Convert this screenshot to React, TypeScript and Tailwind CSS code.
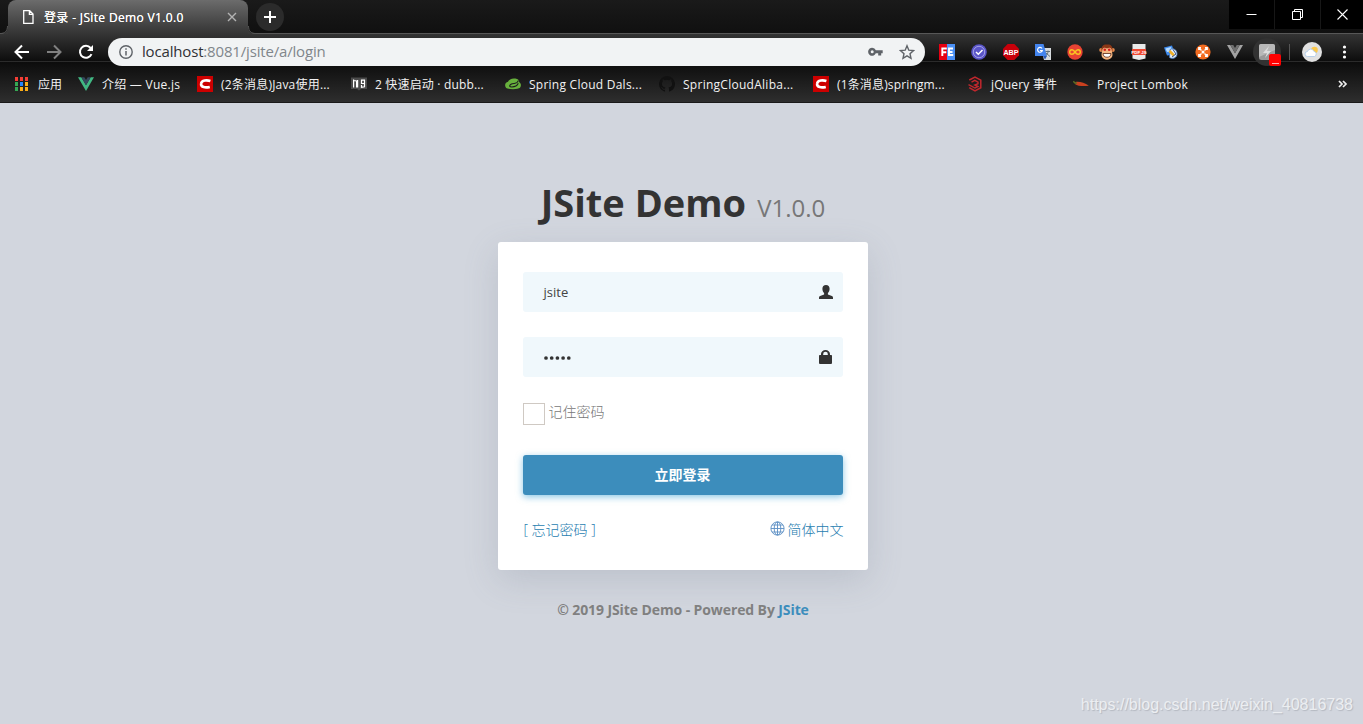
import React from "react";

type IconProps = { children: React.ReactNode; box?: string; className?: string };

function Icon({ children, box = "0 0 16 16", className = "size-4" }: IconProps) {
  return (
    <svg viewBox={box} className={`shrink-0 ${className}`} fill="none">
      {children}
    </svg>
  );
}

const CsdnIcon = () => (
  <Icon>
    <path fill="#c00" d="M0 0h16v16H0z" />
    <path d="M13.400 5C10 3.900 4.500 4 4.100 7.700c-.5 3.800 4.500 4.200 8.700 3.200" stroke="#fff" strokeWidth="2.600" />
  </Icon>
);

const AppsIcon = () => (
  <Icon>
    {[
      [1, 1, "#f43e35"], [6, 1, "#f43e35"], [11, 1, "#f43e35"],
      [1, 6, "#35a853"], [6, 6, "#2684fc"], [11, 6, "#fbad18"],
      [1, 11, "#35a853"], [6, 11, "#fbad18"], [11, 11, "#fbad18"],
    ].map(([x, y, c], i) => (
      <rect key={i} x={x} y={y} width="3" height="4" fill={c as string} />
    ))}
  </Icon>
);

const VueIcon = () => (
  <Icon>
    <path fill="#41b883" d="M0 1.200h3.300L8 9.300l4.700-8.100H16L8 15z" />
    <path fill="#35495e" d="M3.300 1.200h3L8 4l1.700-2.800h3L8 9.300z" />
  </Icon>
);

const DubboIcon = () => (
  <Icon>
    <path fill="#4a4a4a" d="M0 1.500h16v11.500H10l-2 1.500L6 13H0z" />
    <path d="M2.600 11.500V3.500M2.600 4.500l3 .5v6.500M6.600 4v7.500M13.500 4.200h-3v3.300h3M13.500 3.500v7.300l-3 .5V9" stroke="#fff" strokeWidth="1.200" />
  </Icon>
);

const SpringIcon = () => (
  <Icon>
    <path fill="#68b13d" d="M1 11.800C-.8 9.200.3 6.300 3 5.800 4 3 8 1.700 12 3c1.800.6 2 2 2.200 3.300 1.900 1 2.300 3.700.8 5.500-1.700 1.800-12.200 1.800-14 0z" />
    <path d="M13.300 4.500C12.500 8.500 8.500 6.700 6 8.300c-2.200 1.500-1.500 2.700.8 2.700 3-.1 5.500-1.400 6.500-3.700" stroke="#1d1d1d" strokeWidth="1.100" />
  </Icon>
);

const GithubIcon = () => (
  <Icon>
    <path
      fill="#111"
      d="M8 0a8 8 0 0 0-2.530 15.590c.4.070.55-.17.55-.38v-1.490c-2.230.49-2.700-.95-2.700-.95-.36-.93-.89-1.170-.89-1.170-.73-.5.05-.49.050-.49.800.06 1.230.83 1.230.83.720 1.220 1.870.87 2.330.66.070-.52.280-.87.510-1.070-1.780-.2-3.640-.89-3.640-3.950 0-.87.310-1.590.82-2.150-.08-.2-.36-1.020.08-2.120 0 0 .67-.21 2.200.82a7.600 7.600 0 0 1 4 0c1.530-1.040 2.200-.82 2.200-.82.440 1.100.16 1.920.08 2.120.51.56.820 1.270.82 2.150 0 3.070-1.870 3.750-3.650 3.950.29.250.54.730.54 1.480v2.200c0 .21.150.46.55.38A8 8 0 0 0 8 0z"
    />
  </Icon>
);

const JQueryIcon = () => (
  <Icon>
    <path d="M2.300 4 8 1l5.800 3.200v7.500L8 15l-5.800-3.300" stroke="#c1272d" strokeWidth="1.500" />
    <path d="m4.500 6.200 3.300-1.800 3.200 1.800v1.500L7.800 9 11 10.500 8 12 1.500 8.700" stroke="#c1272d" strokeWidth="1.400" />
  </Icon>
);

const ChiliIcon = () => (
  <Icon>
    <path fill="#c9401f" d="M2.500 6c4-.8 9 1 13.300 3.700-4.500.6-11.300.6-13.600-1.500z" />
    <path d="M.5 5C1 7 2 7.500 4 7" stroke="#596e22" strokeWidth="1.300" />
  </Icon>
);

const bookmarks = [
  { icon: <AppsIcon />, label: "应用", box: "w-[64px]", track: "" },
  { icon: <VueIcon />, label: "介绍 — Vue.js", box: "w-[119px]", track: "tracking-[0.25px]" },
  { icon: <CsdnIcon />, label: "(2条消息)Java使用...", box: "w-[154px]", track: "tracking-[0.2px]" },
  { icon: <DubboIcon />, label: "2 快速启动 · dubb...", box: "w-[154px]", track: "tracking-[0.17px]" },
  { icon: <SpringIcon />, label: "Spring Cloud Dals...", box: "w-[154px]", track: "tracking-[0.25px]" },
  { icon: <GithubIcon />, label: "SpringCloudAliba...", box: "w-[154px]", track: "tracking-[0.27px]" },
  { icon: <CsdnIcon />, label: "(1条消息)springm...", box: "w-[154px]", track: "tracking-[0.15px]" },
  { icon: <JQueryIcon />, label: "jQuery 事件", box: "w-[106px]", track: "tracking-[0.2px]" },
  { icon: <ChiliIcon />, label: "Project Lombok", box: "w-[120px]", track: "tracking-[0.23px]" },
];

const extensions = [
  <Icon>
    <path fill="#e60012" d="M0 0h8v16H0z" />
    <path fill="#4a90f5" d="M8 0h8v16H8z" />
    <path d="M3.300 12V4.500h4.500M3.300 8.300h4M14 4.500h-4V11h4.200M10 8h3.500" stroke="#fff" strokeWidth="1.900" />
  </Icon>,
  <Icon>
    <circle cx="8" cy="8" r="7.800" fill="#5a55c8" />
    <circle cx="8" cy="8" r="5.700" stroke="#b5b2ee" strokeWidth=".8" />
    <path d="m5 8 2.300 2.300L11.500 6" stroke="#fff" strokeWidth="1.500" />
  </Icon>,
  <Icon>
    <path fill="#c8000a" d="M4.700 0h6.600L16 4.700v6.600L11.300 16H4.700L0 11.300V4.700z" />
    <text x="8" y="10.800" fontSize="7.200" fontWeight="700" textAnchor="middle" fill="#fff" className="font-['Liberation_Sans',sans-serif]">ABP</text>
  </Icon>,
  <Icon>
    <path fill="#d6dadd" d="M6 4h10v12H9z" />
    <path fill="#4384ee" d="M0 0h8.500l3.500 12H0z" />
    <path fill="#2858b5" d="M8 12h4l-2 3.500z" />
    <path d="M7 4.500a2.400 2.400 0 1 0 .3 2H5" stroke="#fff" strokeWidth="1.200" />
    <path d="M10.500 7.500H15M13 6.500v1c0 2-1 3-2 4m0-2.500 4 3.500" stroke="#60717c" />
  </Icon>,
  <Icon>
    <circle cx="8" cy="8" r="7.700" fill="#e84333" />
    <path d="M8 8C6.800 6.200 6 5.700 5 5.700a2.300 2.300 0 0 0 0 4.600C6 10.300 6.800 9.800 8 8s2-2.300 3-2.300a2.300 2.300 0 0 1 0 4.600C10 10.300 9.200 9.800 8 8z" stroke="#f9c623" strokeWidth="1.400" />
  </Icon>,
  <Icon>
    <circle cx="2.200" cy="6" r="2" fill="#e3894c" />
    <circle cx="13.800" cy="6" r="2" fill="#e3894c" />
    <path fill="#8b3716" d="M2.500 6C2 2 5 0 8 .5c3-.5 6 1 5.500 6L12 13l-4 3-4-3z" />
    <path fill="#f5b681" d="M3.500 5c1.500-2 3-1.500 4.500-.5 1.500-1 3-1.500 4.500.5l1 5.500C13.500 14 11 15.500 8 15.500S2.500 14 2.500 10.500z" />
    <circle cx="5.800" cy="5.800" r="1.300" fill="#d61c1c" />
    <circle cx="10.200" cy="5.800" r="1.300" fill="#d61c1c" />
    <path fill="#fff" stroke="#592b18" strokeWidth=".8" d="M4 9.500h8c0 5-8 5-8 0z" />
  </Icon>,
  <Icon>
    <path fill="#e9e9e9" d="M1.500 0h13v14.500L8 16l-6.500-1.500z" />
    <path fill="#ee4932" d="M1 5h14v6H1z" />
    <text x="8" y="9.800" fontSize="4.400" fontWeight="700" textAnchor="middle" fill="#fff" className="font-['Liberation_Sans',sans-serif]">PDF JS</text>
  </Icon>,
  <Icon>
    <path fill="#3f8cf0" d="M1 3.500 9 1.500l3 9-8 1z" />
    <path fill="#b5dcff" d="m2.500 4.500 5.500-1.500 1 4.500-5 .5z" />
    <path fill="#e2effb" stroke="#3b70b8" strokeWidth=".8" d="M7 5.500c4-2 7.500 1 7 5-.5 3.500-4.500 5-7.500 3z" />
    <path d="m6.500 7 4.500 4.500" stroke="#f2b026" strokeWidth="2.500" />
    <path d="m10 5.500 3 4.500-4 3" stroke="#263f78" strokeWidth=".9" />
  </Icon>,
  <Icon>
    <circle cx="8" cy="8" r="7.600" fill="#f36c21" />
    <path d="M3.800 6V3.800H6M10 3.800h2.200V6M12.200 10v2.200H10M6 12.200H3.800V10M4 4l2.500 2.500M12 4 9.500 6.500M4 12l2.500-2.500M12 12 9.500 9.500" stroke="#fff" strokeWidth="1.400" />
    <circle cx="8" cy="8" r="1.500" fill="#fff" />
  </Icon>,
  <Icon>
    <path fill="#a3a3a3" d="M0 1h3.300L8 9.300 12.700 1H16L8 15z" />
    <path fill="#707070" d="M3.300 1h3L8 4l1.700-3h3L8 9.300z" />
  </Icon>,
];

function WindowControls() {
  return (
    <div className="flex h-[29px] gap-px bg-[#171717]">
      <div className="flex w-[45px] items-center justify-center bg-black">
        <Icon className="size-[11px]" box="0 0 11 11"><path d="M.5 5.500h10" stroke="#fff" /></Icon>
      </div>
      <div className="flex w-[45px] items-center justify-center bg-black">
        <Icon className="size-[11px]" box="0 0 11 11"><path d="M.5 2.500h8v8h-8zM2.500 2.500v-2h8v8h-2" stroke="#fff" /></Icon>
      </div>
      <div className="flex w-[42px] items-center justify-center bg-black">
        <Icon className="size-[11px]" box="0 0 11 11"><path d="m.5.5 10 10m0-10-10 10" stroke="#fff" strokeWidth="1.100" /></Icon>
      </div>
    </div>
  );
}

function TabStrip() {
  return (
    <div className="flex h-[34px] items-start justify-between border-b border-[#575757] bg-linear-to-b from-[#1a1a1a] to-[#101010]">
      <div className="flex">
        <div className="relative ml-2 h-[34px] w-[240px] rounded-t-lg bg-linear-to-b from-[#6c6c6c] to-[#343434]">
          <svg viewBox="0 0 8 8" className="absolute -left-2 bottom-0 size-2" fill="none">
            <path d="M8 0v8H0c4 0 8-2 8-8" fill="#383838" />
            <path d="M0 7.500c4.500 0 7.500-2 7.500-7.500" stroke="#555" />
          </svg>
          <svg viewBox="0 0 8 8" className="absolute -right-2 bottom-0 size-2" fill="none">
            <path d="M0 0v8h8C4 8 0 6 0 0" fill="#383838" />
            <path d="M8 7.500C3.500 7.500.5 5.500.5 0" stroke="#555" />
          </svg>
          <div className="flex h-[34px] items-center pl-3.5 pr-[10px]">
            <Icon className="mr-2 size-[14px]" box="0 0 14 14">
              <path d="M1.700.7h6l3.300 3.300v9.300H1.700zM7.400.7v3.600H11" stroke="#fff" strokeWidth="1.300" />
            </Icon>
            <span className="grow whitespace-nowrap pt-px text-xs tracking-[0.35px] text-white [text-shadow:0_0_0.500px_#fff]">登录 - JSite Demo V1.0.0</span>
            <Icon className="size-3" box="0 0 12 12"><path d="m2 2 8 8m0-8-8 8" stroke="#b3b3b3" strokeWidth="1.400" /></Icon>
          </div>
        </div>
        <div className="ml-2 mt-[3px] flex size-7 items-center justify-center rounded-full bg-[#2b2b2b]">
          <Icon className="size-3" box="0 0 12 12"><path d="M6 0v12M0 6h12" stroke="#fff" strokeWidth="2" /></Icon>
        </div>
      </div>
      <WindowControls />
    </div>
  );
}

function Toolbar() {
  return (
    <div className="flex h-9 items-center">
      <div className="flex w-[108px] items-center gap-4">
        <Icon className="ml-3.5 size-4"><path d="M15 8H2M8 1.500 1.500 8 8 14.500" stroke="#fff" strokeWidth="2" /></Icon>
        <Icon><path d="M1 8h13M8 1.500 14.500 8 8 14.500" stroke="#808080" strokeWidth="2" /></Icon>
        <Icon><path d="M13.500 10.200A6 6 0 1 1 12.600 4" stroke="#fff" strokeWidth="2" /><path d="M15 1v6H9z" fill="#fff" /></Icon>
      </div>
      <div className="flex h-7 w-[817px] items-center rounded-full bg-[#f1f3f4] pl-[11px] pr-2.5">
        <Icon className="size-[14px]" box="0 0 14 14">
          <circle cx="7" cy="7" r="6.200" stroke="#5f6368" strokeWidth="1.400" />
          <path d="M7 6v4.500M7 3.300v1.500" stroke="#5f6368" strokeWidth="1.500" />
        </Icon>
        <span className="ml-[9px] grow whitespace-nowrap pb-px text-[15px] tracking-[-0.17px] text-[#80868b]">
          <span className="text-[#303134]">localhost</span>:8081/jsite/a/login
        </span>
        <Icon className="mr-4 h-4 w-[15px]" box="0 0 15 16">
          <path fill="#5f6368" fillRule="evenodd" d="M7.800 6.300h6.900v3h-1.500v2.200h-3V9.300H7.800a4 4 0 1 1 0-3zM4.200 6.300a1.500 1.500 0 1 0 0 3 1.500 1.500 0 0 0 0-3z" />
        </Icon>
        <Icon className="size-4">
          <path d="m8 1.800 1.800 4.400 4.700.4-3.500 3.100 1 4.600L8 11.900l-4 2.400 1-4.600-3.500-3.100 4.700-.4z" stroke="#5f6368" strokeWidth="1.400" />
        </Icon>
      </div>
      <div className="ml-1.5 flex">
        {extensions.map((e, i) => (
          <div key={i} className="flex w-8 justify-center">{e}</div>
        ))}
      </div>
      <div className="relative ml-[2px] flex size-7 items-center justify-center rounded-full bg-[#323232]">
        <Icon>
          <rect width="16" height="16" rx="2.500" fill="#999" />
          <path fill="#b8b8b8" d="M2 0h12q2 0 2 2v4L0 13V2q0-2 2-2z" />
          <path fill="#ddd" d="m10 2-6 7h4l-2 5 6-7H8z" />
        </Icon>
        <div className="absolute left-4 top-4 flex h-3 w-3 items-end justify-center rounded-[2px] bg-[#f00] pb-[2px]">
          <span className="h-px w-[7px] bg-[#ffb0b0]" />
        </div>
      </div>
      <div className="ml-2 h-4 w-px bg-[#555]" />
      <Icon className="ml-3 size-5" box="0 0 20 20">
        <circle cx="10" cy="10" r="10" fill="#e1e1e1" />
        <circle cx="12.500" cy="8" r="3.300" fill="#fbc84c" />
        <path fill="#fff" stroke="#a9c8e8" strokeWidth=".8" d="M5.500 14.500a2.500 2.500 0 0 1 0-5 3.300 3.300 0 0 1 6.300-.2 2.700 2.700 0 0 1 .7 5.200z" />
      </Icon>
      <Icon className="ml-[14px] size-4">
        <circle cx="8.500" cy="3" r="1.600" fill="#fff" />
        <circle cx="8.500" cy="8" r="1.600" fill="#fff" />
        <circle cx="8.500" cy="13" r="1.600" fill="#fff" />
      </Icon>
    </div>
  );
}

function BookmarkBar() {
  return (
    <div className="flex h-[33px] items-start pl-[14px] pt-1.5 text-xs text-[#f2f2f2]">
      {bookmarks.map((b) => (
        <div key={b.label} className={`flex shrink-0 items-start gap-2 ${b.box}`}>
          {b.icon}
          <span className={`whitespace-nowrap leading-[18px] ${b.track}`}>{b.label}</span>
        </div>
      ))}
      <Icon className="ml-[145px] mt-[3px] h-[10px] w-[10px]" box="0 0 10 10">
        <path d="m1 2 3 3-3 3m4-6 3 3-3 3" stroke="#eee" strokeWidth="1.700" />
      </Icon>
    </div>
  );
}

function LoginCard() {
  return (
    <div className="ml-[2px] h-[328px] w-[370px] rounded-[3px] bg-white px-[25px] pt-[30px] text-sm shadow-[0_10px_35px_rgba(100,110,130,0.2)]">
      <div className="flex h-10 items-center justify-between rounded-[3px] bg-[#f0f8fc] pl-[21px] pr-[10px] text-[13px] text-[#444]">
        <span>jsite</span>
        <Icon className="size-[14px]" box="0 0 14 14">
          <path fill="#333" d="M7 0c2.300 0 3.600 1.500 3.600 3.700 0 1.800-.7 3.300-1.700 4.300v1.400l4 1.700c.8.400 1.100 1 1.100 1.600V14H0v-1.300c0-.6.300-1.200 1.100-1.600l4-1.700V8c-1-1-1.700-2.500-1.700-4.300C3.400 1.500 4.700 0 7 0z" />
        </Icon>
      </div>
      <div className="mt-[25px] flex h-10 items-center justify-between rounded-[3px] bg-[#f0f8fc] pl-[21px] pr-[11px]">
        <Icon className="mt-px h-1 w-7" box="0 0 28 4">
          {[2, 7.700, 13.400, 19.100, 24.800].map((x) => <circle key={x} cx={x} cy="2" r="1.850" fill="#333" />)}
        </Icon>
        <Icon className="h-[14px] w-[13px]" box="0 0 13 14">
          <path fill="#333" fillRule="evenodd" d="M2 5V4a4.500 4 0 0 1 9 0v1h1.200q.8 0 .8.8V13q0 1-1 1H1q-1 0-1-1V5.800Q0 5 .8 5zm2.200 0h4.600V4a2.300 2.200 0 0 0-4.600 0z" />
        </Icon>
      </div>
      <div className="mt-[26px] flex h-[22px] gap-1 text-[#777]">
        <span className="size-[22px] border border-[#cfc9c3]" />
        <span className="-mt-px font-light leading-5">记住密码</span>
      </div>
      <button className="mt-[30px] block h-10 w-full rounded-[3px] bg-[#3c8dbc] text-sm font-bold text-white shadow-[0_2px_7px_rgba(60,160,210,0.6)]">
        立即登录
      </button>
      <div className="-mr-px ml-px mt-[25px] flex justify-between font-light leading-5 text-[#277db0]">
        <span>[ 忘记密码 ]</span>
        <span className="flex items-start gap-[3px]">
          <Icon className="mt-[1px] size-[15px]" box="0 0 15 15">
            <g stroke="#5b8fc4" strokeWidth=".9">
              <circle cx="7.500" cy="7.500" r="6.600" />
              <ellipse cx="7.500" cy="7.500" rx="3.300" ry="6.600" />
              <path d="M7.500 1v13M1 7.500h13M2 4h11M2 11h11" />
            </g>
          </Icon>
          简体中文
        </span>
      </div>
    </div>
  );
}

export default function App() {
  return (
    <div className="flex h-[724px] w-[1363px] flex-col overflow-hidden bg-[#d2d6de] font-['Open_Sans','Noto_Sans_CJK_SC',sans-serif]">
      <TabStrip />
      <div className="h-[69px] shrink-0 border-b border-[#1a1a1a] bg-[linear-gradient(#343434_0,#0d0d0d_27px,#2b2b2b_27px,#2b2b2b_28px,#0c0c0c_28px,#2e2e2e_68px)]">
        <Toolbar />
        <BookmarkBar />
      </div>
      <main className="flex grow flex-col items-center">
        <h1 className="mt-[71px] flex h-[68px] items-baseline gap-[11px] whitespace-nowrap pl-[3px] leading-[56px] text-[#333]">
          <span className="text-[38px] font-bold">JSite Demo</span>
          <span className="text-2xl text-[#777]">V1.0.0</span>
        </h1>
        <LoginCard />
        <p className="ml-[3px] mt-[30px] whitespace-nowrap text-[14px] font-bold leading-5 tracking-[-0.1px] text-[#808080]">
          © 2019 JSite Demo - Powered By <span className="text-[#3c8dbc]">JSite</span>
        </p>
        <p className="mr-[10px] mt-auto self-end pb-2 font-['Liberation_Sans',sans-serif] text-base leading-[22px] text-[#eceef1] [text-shadow:1px_1px_1px_#b4b8c0]">
          https://blog.csdn.net/weixin_40816738
        </p>
      </main>
    </div>
  );
}
